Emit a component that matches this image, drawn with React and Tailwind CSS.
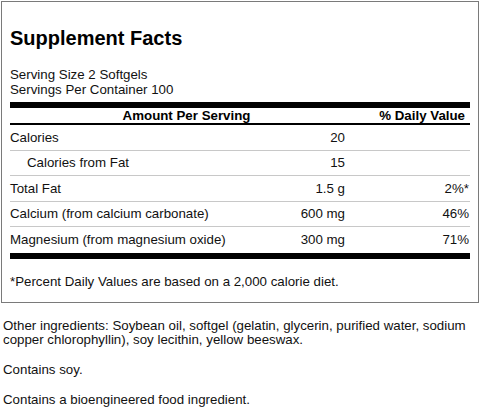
const rows = [
    { label: "Calories", amount: "20", dv: "", indent: false },
    { label: "Calories from Fat", amount: "15", dv: "", indent: true },
    { label: "Total Fat", amount: "1.5 g", dv: "2%*", indent: false },
    { label: "Calcium (from calcium carbonate)", amount: "600 mg", dv: "46%", indent: false },
    { label: "Magnesium (from magnesium oxide)", amount: "300 mg", dv: "71%", indent: false },
];

const App = () => {
    return (
        <div className="bg-white w-[480px] h-[408px] p-px text-[13.3px] leading-[15px] text-[#111] font-['Liberation_Sans',Arial,sans-serif]">
            <div className="border border-[#7a7a7a] px-[8px] pt-[24px] pb-[13px]">
                <h1 className="text-[20px] leading-[24px] font-bold text-black">Supplement Facts</h1>

                <div className="mt-[17px]">
                    <p>Serving Size 2 Softgels</p>
                    <p>Servings Per Container 100</p>
                </div>

                <div className="mt-[5px] h-[6px] bg-black"></div>

                <div className="flex font-bold text-black border-b-2 border-black">
                    <div className="w-[353px] text-center">Amount Per Serving</div>
                    <div className="flex-1 text-right pr-[5px]">% Daily Value</div>
                </div>

                {rows.map((row, i) => (
                    <div
                        key={row.label}
                        className={
                            i < rows.length - 1
                                ? "flex items-center h-[25.5px] border-b border-[#c8c8c8]"
                                : "flex items-center h-[25.5px]"
                        }
                    >
                        <div className={row.indent ? "flex-1 pl-[17px]" : "flex-1"}>{row.label}</div>
                        <div className="w-[80px] text-right">{row.amount}</div>
                        <div className="w-[125px] text-right pr-px">{row.dv}</div>
                    </div>
                ))}

                <div className="h-[6px] bg-black"></div>

                <p className="mt-[15px]">*Percent Daily Values are based on a 2,000 calorie diet.</p>
            </div>

            <div className="pl-[2px] mt-[16px]">
                <p className="leading-[14px]">
                    Other ingredients: Soybean oil, softgel (gelatin, glycerin, purified water, sodium copper chlorophyllin), soy lecithin, yellow beeswax.
                </p>
                <p className="mt-[15px]">Contains soy.</p>
                <p className="mt-[15px]">Contains a bioengineered food ingredient.</p>
            </div>
        </div>
    );
};

export default App;
